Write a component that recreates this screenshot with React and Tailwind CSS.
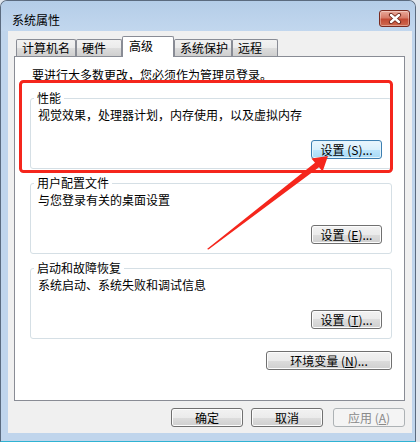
import React from 'react';

const btnNormal =
  'flex items-center justify-center h-[19px] rounded-[3px] border border-[#707070] text-black bg-[linear-gradient(180deg,#f2f2f2_0%,#ebebeb_50%,#dddddd_50%,#cfcfcf_100%)] shadow-[inset_0_0_0_1px_#fcfcfc]';
const btnFocus =
  'flex items-center justify-center h-[19px] rounded-[3px] border border-[#3c7fb1] text-black bg-[linear-gradient(180deg,#eaf6fd_0%,#d9f0fc_50%,#bee6fd_50%,#a7d9f5_100%)] shadow-[inset_0_0_0_1px_#e5f4fc]';
const btnDisabled =
  'flex items-center justify-center h-[19px] rounded-[3px] border border-[#adb2b5] text-[#8a8a8a] bg-[#f4f4f4]';

const tabIdle =
  'h-[17px] border border-b-0 border-[#898c95] rounded-t-[2px] pl-[5px] leading-[16px] bg-[linear-gradient(180deg,#f2f2f2_0%,#ebebeb_50%,#dddddd_50%,#cfcfcf_100%)]';

const Group = ({ title, desc, children, className = '' }) => (
  <fieldset className={`rounded-[3px] border border-[#d5dfe5] pl-[7px] pr-[9px] pb-[9px] ${className}`}>
    <legend className="ml-[-4px] px-[3px] leading-[16px]">{title}</legend>
    <p className="mt-[1px] leading-[16px]">{desc}</p>
    <div className="mt-[17px] flex justify-end">{children}</div>
  </fieldset>
);

const CloseButton = () => (
  <div className="mt-[9px] mr-[5px] flex h-[17px] w-[31px] items-center justify-center rounded-[3px] border border-[#7a2a1f] bg-[linear-gradient(180deg,#e9a99a_0%,#d77b68_45%,#c24a34_55%,#cf6a4f_100%)] shadow-[inset_0_0_0_1px_rgba(255,255,255,0.35)]">
    <svg width="14" height="11" viewBox="0 0 14 11">
      <path d="M3 2 L11 9 M11 2 L3 9" stroke="#6b2418" strokeWidth="4.2" strokeLinecap="round" />
      <path d="M3 2 L11 9 M11 2 L3 9" stroke="#ffffff" strokeWidth="2.4" strokeLinecap="round" />
    </svg>
  </div>
);

export default function App() {
  return (
    <div className="relative w-[420px] h-[442px] overflow-hidden bg-[#dfe6ee] text-[12px] text-black font-['Noto_Sans_CJK_SC','Noto_Sans',sans-serif]">
      {/* Window */}
      <div className="flex h-[442px] w-[416px] flex-col rounded-t-[7px] border border-[#5b6b7f] border-b-[#2fb3d3] bg-[#c0d5ec]">
        {/* Title bar */}
        <div className="flex h-[30px] justify-between rounded-t-[6px] bg-[linear-gradient(180deg,#b4cde8_0%,#c2d7ee_100%)]">
          <span className="pl-[11px] pt-[11px] leading-[16px]">系统属性</span>
          <CloseButton />
        </div>

        {/* Client area */}
        <div className="ml-[7px] h-[402px] w-[404px] bg-[#f0f0f0] pt-[5px]">
          {/* Tabs */}
          <div className="relative z-10 ml-[8px] flex h-[20px] items-end">
            <div className={`${tabIdle} w-[60px]`}>计算机名</div>
            <div className={`${tabIdle} w-[46px]`}>硬件</div>
            <div className="mb-[-1px] h-[21px] w-[52px] rounded-t-[2px] border border-b-0 border-[#898c95] bg-white pl-[6px] pt-[1px] leading-[16px]">
              高级
            </div>
            <div className={`${tabIdle} w-[58px]`}>系统保护</div>
            <div className={`${tabIdle} w-[46px]`}>远程</div>
          </div>

          {/* Tab panel */}
          <div className="ml-[6px] h-[345px] w-[391px] border border-[#898c95] bg-white pl-[15px] pr-[12px] pt-[10px]">
            <p className="ml-[2px] leading-[16px]">要进行大多数更改，您必须作为管理员登录。</p>

            <Group title="性能" desc="视觉效果，处理器计划，内存使用，以及虚拟内存" className="mt-[7px]">
              <button className={`${btnFocus} w-[71px]`}>设置 (S)...</button>
            </Group>

            <Group title="用户配置文件" desc="与您登录有关的桌面设置" className="mt-[6px]">
              <button className={`${btnNormal} w-[71px]`}>
                设置 (<span className="underline">E</span>)...
              </button>
            </Group>

            <Group title="启动和故障恢复" desc="系统启动、系统失败和调试信息" className="mt-[6px]">
              <button className={`${btnNormal} w-[71px]`}>
                设置 (<span className="underline">T</span>)...
              </button>
            </Group>

            <div className="mt-[12px] flex justify-end">
              <button className={`${btnNormal} w-[126px]`}>
                环境变量 (<span className="underline">N</span>)...
              </button>
            </div>
          </div>

          {/* Dialog buttons */}
          <div className="mt-[7px] flex justify-end pr-[7px]">
            <button className={`${btnNormal} w-[72px]`}>确定</button>
            <button className={`${btnNormal} ml-[8px] w-[72px]`}>取消</button>
            <button className={`${btnDisabled} ml-[10px] w-[72px]`}>
              应用 (<span className="underline">A</span>)
            </button>
          </div>
        </div>
      </div>

      {/* Red annotation overlay */}
      <svg className="pointer-events-none absolute left-0 top-0" width="420" height="442" viewBox="0 0 420 442">
        <rect x="20.5" y="81.5" width="371" height="90" rx="3" fill="none" stroke="#f5261c" strokeWidth="3" />
        <polygon
          points="207,249 315,162.7 311.4,158.6 328,156 322.6,171.4 319,167.3 208.5,249.5"
          fill="#f5261c"
        />
      </svg>
    </div>
  );
}
